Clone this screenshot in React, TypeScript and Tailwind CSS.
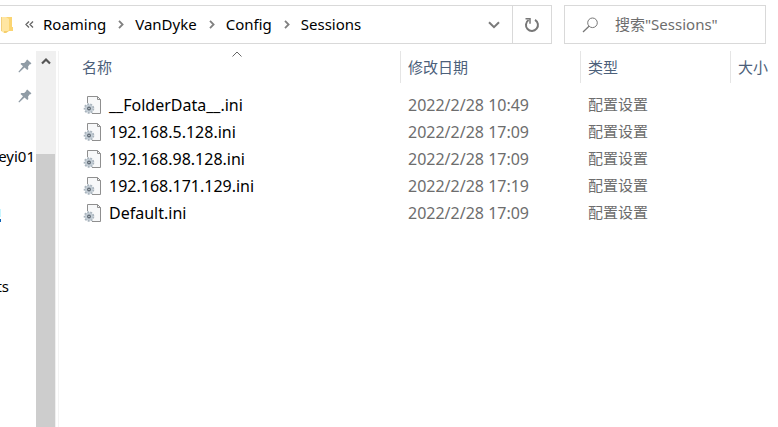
import { useState } from 'react'

const crumbs = ['Roaming', 'VanDyke', 'Config', 'Sessions']

const files = [
  { name: '__FolderData__.ini', date: '2022/2/28 10:49', type: '配置设置' },
  { name: '192.168.5.128.ini', date: '2022/2/28 17:09', type: '配置设置' },
  { name: '192.168.98.128.ini', date: '2022/2/28 17:09', type: '配置设置' },
  { name: '192.168.171.129.ini', date: '2022/2/28 17:19', type: '配置设置' },
  { name: 'Default.ini', date: '2022/2/28 17:09', type: '配置设置' },
]

function FolderIcon() {
  return (
    <svg width="13" height="18" viewBox="0 0 13 18" className="shrink-0">
      <path d="M1 1h11v10h1v4H4z" fill="#fbd572" />
      <path d="M1 1h5l3 2v11l-3 3H4l-3-2z" fill="#ffe6a2" />
      <path d="M1 1h1v14H1z" fill="#f2cf7c" />
      <path d="M4 15h5l-3 2H4z" fill="#f5cf6c" />
    </svg>
  )
}

function CrumbArrow() {
  return (
    <svg width="6" height="9" viewBox="0 0 6 9" fill="none" className="shrink-0">
      <path d="M1 .8L4.6 4.5 1 8.2" stroke="#808080" strokeWidth="1.8" />
    </svg>
  )
}

function PinIcon() {
  return (
    <svg width="14" height="14" viewBox="0 0 14 14" fill="#909ca6">
      <path d="M8.3 1.2L9.2.6l4.2 3.6-.6 1-1 .1-1.7 2.2.2 2.5-1 1L6.5 8.6 1.2 13.4.4 12.8 5 7.3 2.5 5l.8-1 2.9.1L8.3 2z" />
    </svg>
  )
}

function IniIcon() {
  return (
    <svg width="18" height="20" viewBox="0 0 18 20" fill="none" className="shrink-0">
      <path d="M4.5 1.5h10l3 3v14h-13z" fill="#f7f8f9" />
      <path d="M4.5 8V1.5h10l3 3v14H9" stroke="#8f8f8f" />
      <path d="M14.5 1.5v3h3" stroke="#8f8f8f" />
      <circle cx="6" cy="13.5" r="4.3" fill="#c9d2d9" stroke="#a9b4bd" strokeWidth="2" strokeDasharray="1.8 1.2" />
      <circle cx="6" cy="13.5" r="3.6" fill="#c3cdd5" />
      <circle cx="6" cy="13.5" r="1.9" fill="#5b6670" />
      <circle cx="6" cy="13.5" r=".7" fill="#dfe5e9" />
    </svg>
  )
}

function FolderCrumbs() {
  return (
    <div className="flex min-w-0 flex-1 items-center">
      <FolderIcon />
      <button aria-label="Show parent folders" className="ml-3 flex">
        <svg width="9" height="7" viewBox="0 0 9 7" fill="none" stroke="#666" strokeWidth="1.3">
          <path d="M4 .5l-3 3 3 3M8 .5l-3 3 3 3" />
        </svg>
      </button>
      <ol className="ml-[9px] flex items-center text-[15px]">
        {crumbs.map((c, i) => (
          <li key={c} className="flex items-center">
            {i > 0 && (
              <span className="mr-[11px] ml-3">
                <CrumbArrow />
              </span>
            )}
            <a href={`#${c}`}>{c}</a>
          </li>
        ))}
      </ol>
    </div>
  )
}

export default function App() {
  const [query, setQuery] = useState('')

  return (
    <div className="flex h-screen flex-col overflow-hidden bg-white pt-[5px] font-['Noto_Sans','Noto_Sans_CJK_SC',sans-serif] text-base text-black">
      {/* Address bar and search */}
      <header className="flex h-[39px] shrink-0 gap-3 pr-3">
        <div className="flex min-w-0 flex-1 border border-l-0 border-[#d9d9d9]">
          <FolderCrumbs />
          <button aria-label="Previous locations" className="flex w-9 items-center justify-center">
            <svg width="12" height="8" viewBox="0 0 12 8" fill="none">
              <path d="M1 1.2l5 5 5-5" stroke="#7a7a7a" strokeWidth="2" />
            </svg>
          </button>
          <button aria-label="Refresh" className="flex w-[39px] items-center justify-center border-l border-[#d9d9d9]">
            <svg width="16" height="16" viewBox="0 0 16 16" fill="none" stroke="#777" strokeWidth="2">
              <path d="M11 2.8A6 6 0 1 1 4.6 3" />
              <path d="M1.5 1.8H6v5" strokeWidth="1.5" />
            </svg>
          </button>
        </div>
        <label className="flex w-[202px] items-center gap-4 border border-[#d9d9d9] pl-[17px]">
          <svg width="17" height="16" viewBox="0 0 17 16" fill="none" stroke="#777" className="shrink-0">
            <circle cx="10.5" cy="5.8" r="4.8" />
            <path d="M7 9.3L1 15" strokeWidth="1.3" />
          </svg>
          <input
            aria-label="搜索"
            value={query}
            onChange={(e) => setQuery(e.target.value)}
            placeholder={'搜索"Sessions"'}
            className="w-full min-w-0 text-[15px] outline-none placeholder:text-[#6d6d6d]"
          />
        </label>
      </header>

      <div className="mt-[7px] flex min-h-0 flex-1">
        {/* Navigation tree */}
        <nav className="flex w-9 shrink-0 flex-col text-[15px]">
          <div className="flex h-[30px] items-center justify-end pr-1">
            <PinIcon />
          </div>
          <div className="flex h-[30px] items-center justify-end pr-1">
            <PinIcon />
          </div>
          <a href="#user" className="mt-[30px] flex h-[30px] items-center justify-end pr-px">
            eyi01
          </a>
          <svg width="2" height="14" viewBox="0 0 2 14" className="mt-[38px]">
            <path d="M0 0h1v8H0z" fill="#c8f6ff" />
            <path d="M0 10h1v3H0z" fill="#0b62b5" />
          </svg>
          <a href="#documents" className="mt-12 flex h-[30px] w-[9px] items-center justify-end">
            ts
          </a>
        </nav>
        <div className="flex w-5 shrink-0 flex-col items-start bg-[#f0f0f0]">
          <button aria-label="Scroll up" className="flex h-5 w-full items-center justify-center">
            <svg width="10" height="8" viewBox="0 0 10 8" fill="none">
              <path d="M1 6.5l4-4 4 4" stroke="#555" strokeWidth="2.2" />
            </svg>
          </button>
          <div className="mt-[83px] w-[19px] flex-1 bg-[#cdcdcd]" />
        </div>

        <main className="ml-0.5 min-w-0 flex-1 overflow-hidden border-l border-[#f3f3f3]">
          <table className="w-full table-fixed border-separate border-spacing-0 text-left whitespace-nowrap">
            <colgroup>
              <col className="w-[342px]" />
              <col className="w-[180px]" />
              <col className="w-[150px]" />
              <col />
            </colgroup>
            <thead className="text-[15px] text-[#4c607a]">
              <tr className="h-8">
                <th className="relative border-r border-[#e5e5e5] p-0 pl-[23px] font-normal">
                  名称
                  <svg width="10" height="6" viewBox="0 0 10 6" fill="none" className="absolute top-0 left-1/2 ml-[2px]">
                    <path d="M.5 5.5L5 1l4.5 4.5" stroke="#666" />
                  </svg>
                </th>
                <th className="border-r border-[#e5e5e5] p-0 pl-[7px] font-normal">修改日期</th>
                <th className="border-r border-[#e5e5e5] p-0 pl-[7px] font-normal">类型</th>
                <th className="p-0 pl-[7px] font-normal">大小</th>
              </tr>
            </thead>
            <tbody className="text-[#6d6d6d] before:block before:h-2">
              {files.map((f) => (
                <tr key={f.name} className="h-[27px]">
                  <td className="p-0 pl-6 text-black">
                    <div className="flex items-center gap-2">
                      <IniIcon />
                      {f.name}
                    </div>
                  </td>
                  <td className="p-0 pl-[7px]">{f.date}</td>
                  <td className="p-0 pl-[7px] text-[15px]">{f.type}</td>
                  <td />
                </tr>
              ))}
            </tbody>
          </table>
        </main>
      </div>
    </div>
  )
}
